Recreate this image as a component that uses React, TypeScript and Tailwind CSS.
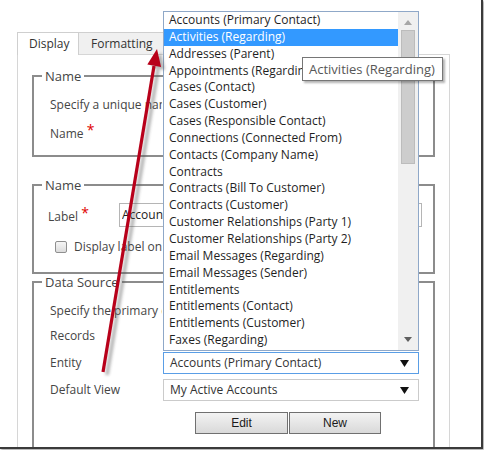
const items = [
  'Accounts (Primary Contact)',
  'Activities (Regarding)',
  'Addresses (Parent)',
  'Appointments (Regarding)',
  'Cases (Contact)',
  'Cases (Customer)',
  'Cases (Responsible Contact)',
  'Connections (Connected From)',
  'Contacts (Company Name)',
  'Contracts',
  'Contracts (Bill To Customer)',
  'Contracts (Customer)',
  'Customer Relationships (Party 1)',
  'Customer Relationships (Party 2)',
  'Email Messages (Regarding)',
  'Email Messages (Sender)',
  'Entitlements',
  'Entitlements (Contact)',
  'Entitlements (Customer)',
  'Faxes (Regarding)',
]

function Caret() {
  return (
    <svg width="9" height="7" viewBox="0 0 9 7" className="shrink-0">
      <path d="M0 0h9L4.5 7z" fill="#111" />
    </svg>
  )
}

function Select({ value, focused }: { value: string; focused?: boolean }) {
  return (
    <div
      className={
        focused
          ? 'flex w-[256px] h-[22px] items-center justify-between border border-[#5a9ee6] bg-white pl-[6px] pr-[9px] text-[#333]'
          : 'flex w-[256px] h-[22px] items-center justify-between border border-[#cbcbcb] bg-white pl-[6px] pr-[9px] text-[#333]'
      }
    >
      <span>{value}</span>
      <Caret />
    </div>
  )
}

// texts that run on under the open list are clipped where the list begins
export default function App() {
  return (
    <div className="relative w-[484px] h-[450px] overflow-hidden bg-white font-['Open_Sans',sans-serif] text-[12px] text-[#454545]">
      <div className="relative w-[483px] h-[449px] overflow-hidden border-r-2 border-b-2 border-[#3a3a3a] shadow-[1px_1px_2px_rgba(0,0,0,0.4)]">
        <div className="pl-[17px] pt-[32px]">
          {/* tabs */}
          <div className="flex h-[22px]">
            <div className="relative z-10 w-[62px] h-[23px] border border-b-0 border-[#cfcfcf] bg-white pl-[11px] leading-[21px] text-[#333]">
              Display
            </div>
            <div className="w-[86px] h-[22px] border-t border-r border-[#cfcfcf] bg-[#f0f0f0] pl-[12px] leading-[21px] text-[#333]">
              Formatting
            </div>
          </div>

          <div className="w-[433px] h-[400px] border-l border-r border-t border-[#d6d6d6] px-[14px]">
            {/* Name */}
            <fieldset className="mt-[13px] h-[89px] border-2 border-[#8c8c8c]">
              <legend className="ml-[8px] px-[3px] text-[13px] leading-[16px] text-[#454545]">Name</legend>
              <div className="pl-[16px] pt-[12px]">
                <p className="w-[112px] overflow-hidden whitespace-nowrap leading-[18px]">Specify a unique name</p>
                <p className="mt-[10px] leading-[18px]">
                  Name <span className="relative -top-[3px] text-[14px] text-[#e00000]">*</span>
                </p>
              </div>
            </fieldset>

            {/* Label */}
            <fieldset className="mt-[20px] h-[97px] border-2 border-[#8c8c8c]">
              <legend className="ml-[8px] px-[3px] text-[13px] leading-[16px] text-[#454545]">Name</legend>
              <div className="pt-[10px] pl-[14px]">
                <div className="flex items-center">
                  <span className="w-[71px]">
                    Label <span className="relative -top-[3px] text-[14px] text-[#e00000]">*</span>
                  </span>
                  <div className="w-[303px] h-[24px] border border-[#b5b5b5] pl-[2px] leading-[22px] text-[#222]">
                    <span className="block w-[41px] overflow-hidden whitespace-nowrap">Accounts</span>
                  </div>
                </div>
                <label className="mt-[13px] flex items-center gap-[7px] pl-[7px]">
                  <span className="w-[12px] h-[12px] shrink-0 rounded-[2px] border border-[#8f8f8f] bg-gradient-to-b from-[#f6f6f6] to-[#dcdcdc]" />
                  <span className="w-[89px] overflow-hidden whitespace-nowrap leading-[14px]">Display label on the form</span>
                </label>
              </div>
            </fieldset>

            {/* Data Source */}
            <fieldset className="h-[200px] border-2 border-[#8c8c8c]">
              <legend className="ml-[8px] px-[3px] text-[13px] leading-[16px] text-[#454545]">Data Source</legend>
              <div className="flex flex-col gap-[5px] pl-[16px] pt-[12px]">
                <p className="w-[112px] overflow-hidden whitespace-nowrap leading-[18px]">Specify the primary data source</p>
                <div className="flex h-[22px] items-center">
                  <span className="w-[113px]">Records</span>
                </div>
                <div className="flex h-[22px] items-center">
                  <span className="w-[113px]">Entity</span>
                  <Select value="Accounts (Primary Contact)" focused />
                </div>
                <div className="flex h-[22px] items-center">
                  <span className="w-[113px]">Default View</span>
                  <Select value="My Active Accounts" />
                </div>
                <div className="mt-[6px] flex pl-[145px] font-['Liberation_Sans',sans-serif] text-[12px] text-[#1a1a1a]">
                  <button className="w-[93px] h-[22px] border border-[#707070] bg-gradient-to-b from-[#f3f3f3] to-[#d9d9d9]">
                    Edit
                  </button>
                  <button className="ml-[1px] w-[92px] h-[22px] border border-[#707070] bg-gradient-to-b from-[#f3f3f3] to-[#d9d9d9]">
                    New
                  </button>
                </div>
              </div>
            </fieldset>
          </div>
        </div>
      </div>

      {/* open dropdown list */}
      <div className="absolute left-[163px] top-[11px] z-20 flex w-[256px] h-[340px] border border-[#8fa8c8] bg-white">
        <ul className="w-[234px] text-[12px] text-[#1f1f1f]">
          {items.map((item, i) => (
            <li
              key={item}
              className={
                i === 1
                  ? 'h-[16.85px] bg-[#3399ff] pl-[5px] leading-[16.85px] text-white'
                  : 'h-[16.85px] pl-[5px] leading-[16.85px]'
              }
            >
              {item}
            </li>
          ))}
        </ul>
        <div className="relative w-[20px] bg-[#f0f0f0]">
          <svg width="8" height="5" viewBox="0 0 8 5" className="absolute left-[6px] top-[8px]">
            <path d="M0 5h8L4 0z" fill="#a6a6a6" />
          </svg>
          <div className="absolute left-[3px] top-[18px] w-[14px] h-[134px] border border-[#bcbcbc] bg-[#cdcdcd]" />
          <svg width="8" height="5" viewBox="0 0 8 5" className="absolute left-[6px] top-[325px]">
            <path d="M0 0h8L4 5z" fill="#5f5f5f" />
          </svg>
        </div>
      </div>

      {/* tooltip */}
      <div className="absolute left-[302px] top-[57px] z-30 w-[141px] h-[24px] border border-[#767676] bg-white pl-[6px] text-[13px] leading-[22px] text-[#575757] shadow-[2px_2px_2px_rgba(0,0,0,0.3)]">
        Activities (Regarding)
      </div>

      {/* red annotation arrow */}
      <svg className="pointer-events-none absolute left-0 top-0 z-40" width="484" height="450" viewBox="0 0 484 450">
        <defs>
          <filter id="blur" x="-20%" y="-20%" width="140%" height="140%">
            <feGaussianBlur stdDeviation="1.5" />
          </filter>
        </defs>
        <g filter="url(#blur)" opacity="0.45" transform="translate(4 3)">
          <line x1="103" y1="372" x2="154" y2="66" stroke="#555" strokeWidth="3.5" />
          <path d="M157 49 L161.1 67 L147.3 64.6 Z" fill="#555" />
        </g>
        <line x1="103" y1="372" x2="154" y2="66" stroke="#b8001a" strokeWidth="3.2" />
        <path d="M157 49 L161.1 67 L147.3 64.6 Z" fill="#b8001a" />
      </svg>
    </div>
  )
}
